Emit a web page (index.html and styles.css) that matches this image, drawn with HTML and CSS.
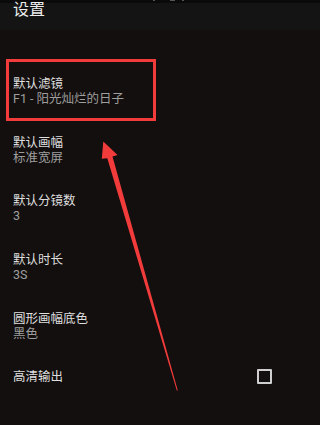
FILE: index.html
```html
<!DOCTYPE html>
<html lang="zh">
<head>
<meta charset="utf-8">
<link rel="stylesheet" href="styles.css">
</head>
<body>
<div class="screen">
  <div class="status"><span class="dot d1"></span><span class="dot d2"></span><span class="dot d3"></span></div>
  <div class="toolbar"><span class="title">设置</span></div>
  <ul class="prefs">
    <li class="pref"><div class="ptitle">默认滤镜</div><div class="psub">F1 - 阳光灿烂的日子</div></li>
    <li class="pref"><div class="ptitle">默认画幅</div><div class="psub">标准宽屏</div></li>
    <li class="pref"><div class="ptitle">默认分镜数</div><div class="psub">3</div></li>
    <li class="pref"><div class="ptitle">默认时长</div><div class="psub">3S</div></li>
    <li class="pref"><div class="ptitle">圆形画幅底色</div><div class="psub">黑色</div></li>
    <li class="pref pref-check"><div class="ptitle">高清输出</div><span class="checkbox"></span></li>
  </ul>
  <div class="highlight"></div>
  <svg class="arrow" width="290" height="425" viewBox="0 0 290 425">
    <polygon points="103.3,141.5 117.5,155 112.5,156.5 177.8,390.5 176.8,390.5 107.3,158.3 101.8,158.8" fill="#f23b3b"/>
  </svg>
</div>
</body>
</html>
```
FILE: styles.css
```css
* { box-sizing: border-box; }
html, body { margin: 0; padding: 0; }
html, body {
  background: linear-gradient(to bottom, #0a0a0a 0, #0a0a0a 3px, #141414 3px, #141414 30px, #130f0e 30px) no-repeat, #130f0e;
  font-family: Roboto, "Noto Sans CJK SC", sans-serif;
}
.screen {
  position: relative;
  width: 290px;
  height: 425px;
  overflow: hidden;
}
.status {
  height: 3px;
  display: flex;
  padding-left: 153px;
}
.dot {
  height: 1px;
  background: #555;
}
.d1 { width: 2px; }
.d2 { width: 5px; margin-left: 15px; }
.d3 { width: 2px; margin-left: 7px; }
.toolbar {
  height: 27px;
  padding-left: 13px;
  display: flex;
  align-items: flex-start;
}
.title {
  color: #ececec;
  font-size: 16px;
  line-height: 14px;
}
.prefs {
  list-style: none;
  margin: 0;
  padding: 32px 0 0 0;
}
.pref {
  height: 58.7px;
  padding: 14px 18px 0 13px;
}
.ptitle {
  color: #dedede;
  font-size: 12.5px;
  line-height: 15px;
}
.psub {
  color: #9e9e9e;
  font-size: 12.5px;
  line-height: 15px;
}
.pref-check {
  display: flex;
  align-items: flex-start;
  justify-content: space-between;
}
.checkbox {
  width: 15px;
  height: 15px;
  border: 2px solid #cfcfcf;
  border-radius: 1px;
}
.highlight {
  position: absolute;
  left: 6px;
  top: 59px;
  width: 150px;
  height: 62px;
  border: 3px solid #f23b3b;
}
.arrow {
  position: absolute;
  left: 0;
  top: 0;
}
```
